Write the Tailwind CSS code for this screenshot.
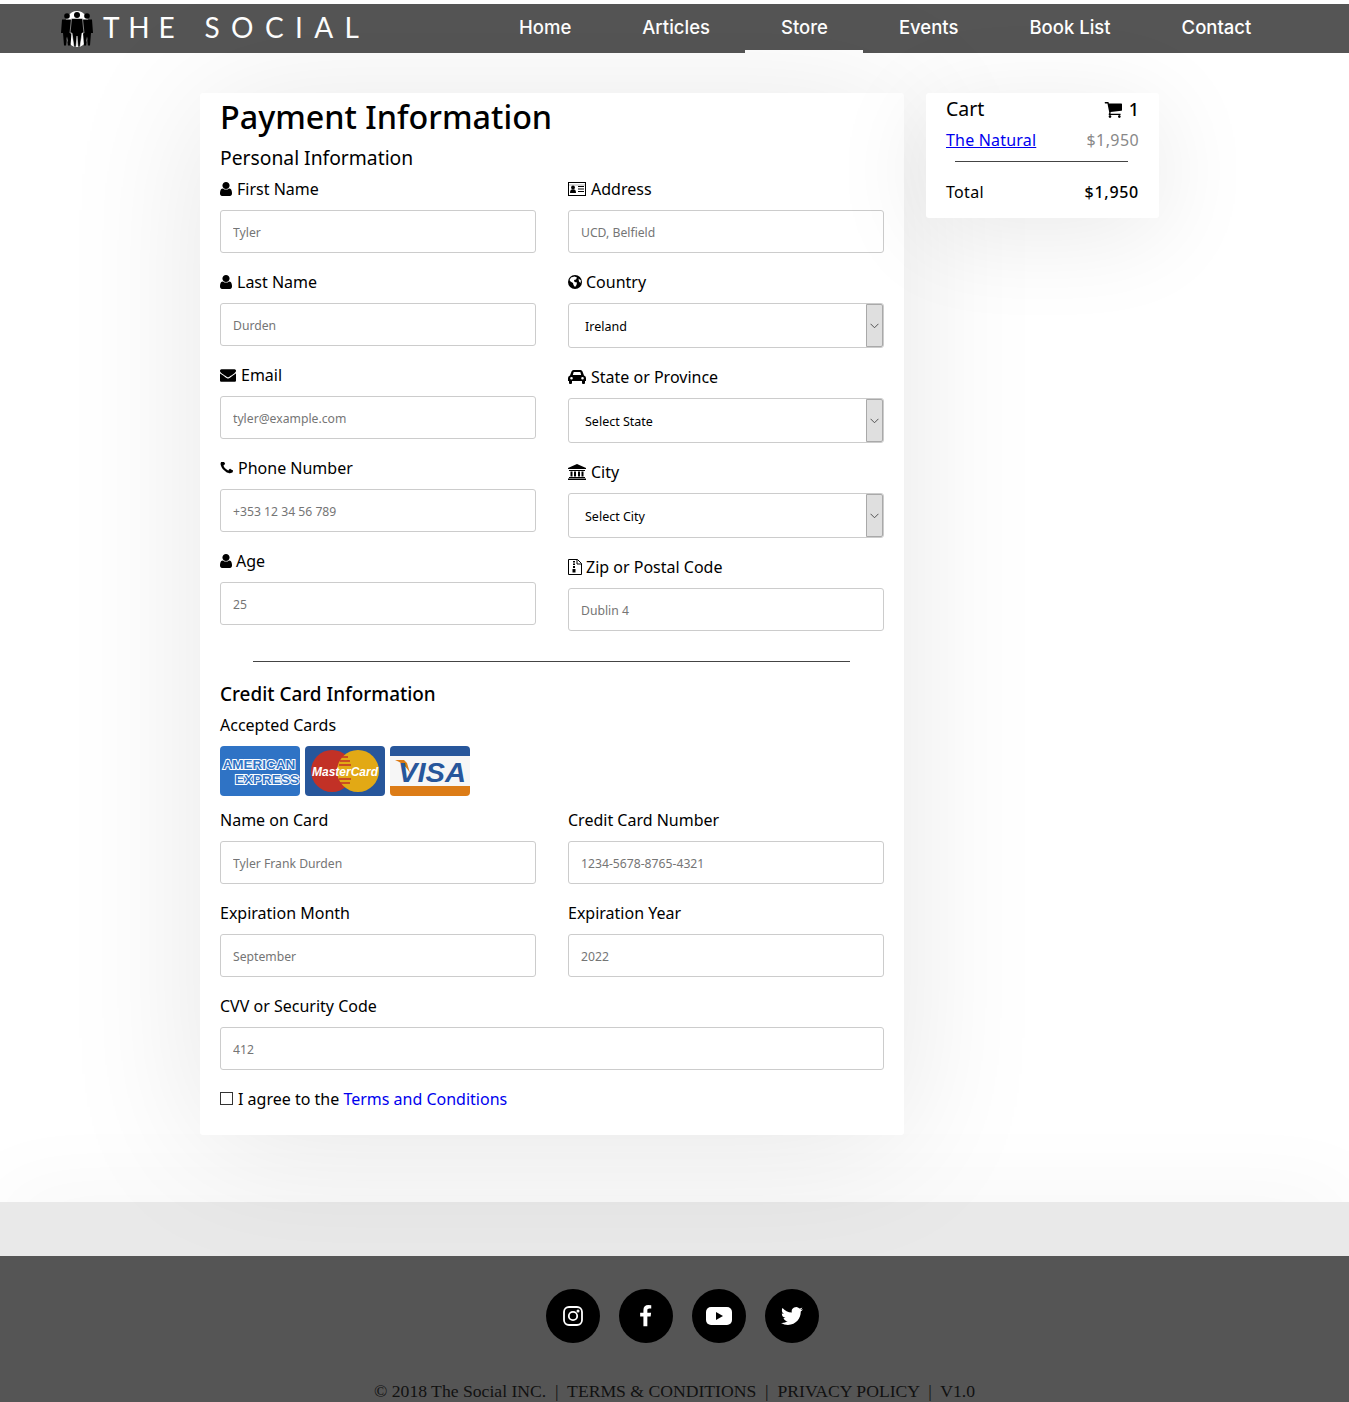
<!DOCTYPE html>
<html lang="en">
<head>
    <meta charset="UTF-8">
    <meta name="viewport" content="width=device-width, initial-scale=1.0">
    <title>Payment | The Social</title>
    <script src="https://cdn.jsdelivr.net/npm/@tailwindcss/browser@4"></script>
</head>
<body class="bg-white font-['Noto_Sans',sans-serif] text-black overflow-hidden">
    <!-- top nav -->
    <header class="mt-1 h-[49px] bg-[#555555] flex text-white">
        <div class="w-[519px] pl-[60px] flex items-center">
            <svg class="w-[34px] h-[36px] mt-px" viewBox="0 0 34 36" fill="#000">
                <ellipse cx="17" cy="18" rx="13" ry="18" fill="#fff"/>
                <circle cx="7" cy="5" r="2.800"/><path d="M2 8.500h10l1.500 13.500h-2l-1 12.500H8l-1-9-1 9H4L3 22H1z"/>
                <circle cx="27" cy="5" r="2.800"/><path d="M22 8.500h10l1 13.500h-2l-1 12.500h-2l-1-9-1 9h-2l-1-12.500h-2z"/>
                <circle cx="17" cy="4" r="3"/><path d="M11.500 7.500h11l1.500 14.500h-2l-2 14h-2l-1-11-1 11h-2l-2-14h-2z" stroke="#fff" stroke-width=".5"/>
            </svg>
            <span class="ml-[9px] pb-[3px] font-['Lato',sans-serif] text-[28px] leading-none whitespace-pre"><span class="tracking-[0.315em]">THE </span><span class="ml-[5px] tracking-[0.407em]">SOCIAL</span></span>
        </div>
        <nav class="flex text-[18.500px] font-medium font-['Inter',sans-serif] -ml-[35.500px]">
            <a class="px-[35.500px] flex items-center pb-0.5" href="#">Home</a>
            <a class="px-[35.500px] flex items-center pb-0.5" href="#">Articles</a>
            <a class="px-[35.500px] flex items-center pt-px border-b-[3px] border-white" href="#">Store</a>
            <a class="px-[35.500px] flex items-center pb-0.5" href="#">Events</a>
            <a class="px-[35.500px] flex items-center pb-0.5" href="#">Book List</a>
            <a class="px-[35.500px] flex items-center pb-0.5" href="#">Contact</a>
        </nav>
    </header>

    <main class="h-[1149px] relative z-10 pt-10 pl-[200px] flex items-start gap-[22px]">
        <!-- payment form -->
        <form class="w-[704px] h-[1042px] bg-white rounded-[3px] px-5 shadow-[0_10px_140px_rgba(0,0,0,0.1)]">
            <h1 class="text-[32.300px] leading-[46px] font-medium">Payment Information</h1>
            <h2 class="text-[19.300px] leading-[30px] mt-1 mb-[5px]">Personal Information</h2>

            <div class="grid grid-cols-2 gap-8 h-[465px]">
                <div>
                    <label class="flex items-center gap-[5px] h-6 pb-0.5 mb-2"><svg class="w-3 h-3.5" viewBox="256 128 1280 1536" preserveAspectRatio="none"><path d="M1536 1399q0 109-62.5 187t-150.5 78h-854q-88 0-150.5-78t-62.5-187q0-85 8.5-160.5t31.5-152 58.5-131 94-89 134.5-34.5q131 128 313 128t313-128q76 0 134.5 34.5t94 89 58.5 131 31.5 152 8.5 160.5zm-256-887q0 159-112.5 271.5t-271.5 112.5-271.5-112.5-112.5-271.5 112.5-271.5 271.5-112.5 271.5 112.5 112.5 271.5z"/></svg>First Name</label>
                    <input class="block w-full h-[43px] border border-[#cccccc] rounded-[3px] px-3 pt-0.5 text-[12.200px] mb-[18px] placeholder:text-[#757575]" placeholder="Tyler">

                    <label class="flex items-center gap-[5px] h-6 pb-0.5 mb-2"><svg class="w-3 h-3.5" viewBox="256 128 1280 1536" preserveAspectRatio="none"><path d="M1536 1399q0 109-62.5 187t-150.5 78h-854q-88 0-150.5-78t-62.5-187q0-85 8.5-160.5t31.5-152 58.5-131 94-89 134.5-34.5q131 128 313 128t313-128q76 0 134.5 34.5t94 89 58.5 131 31.5 152 8.5 160.5zm-256-887q0 159-112.5 271.5t-271.5 112.5-271.5-112.5-112.5-271.5 112.5-271.5 271.5-112.5 271.5 112.5 112.5 271.5z"/></svg>Last Name</label>
                    <input class="block w-full h-[43px] border border-[#cccccc] rounded-[3px] px-3 pt-0.5 text-[12.200px] mb-[18px] placeholder:text-[#757575]" placeholder="Durden">

                    <label class="flex items-center gap-[5px] h-6 pb-0.5 mb-2"><svg class="w-4 h-4" viewBox="0 0 1792 1792"><path d="M1792 710v794q0 66-47 113t-113 47h-1472q-66 0-113-47t-47-113v-794q44 49 101 87 362 246 497 345 57 42 92.5 65.5t94.5 48 110 24.5h2q51 0 110-24.5t94.5-48 92.5-65.5q170-123 498-345 57-39 100-87zm0-294q0 79-49 151t-122 123q-376 261-468 325-10 7-42.5 30.5t-54 38-52 32.5-57.5 27-50 9h-2q-23 0-50-9t-57.5-27-52-32.5-54-38-42.5-30.5q-91-64-262-182.5t-205-142.5q-62-42-117-115.5t-55-136.5q0-78 41.5-130t118.5-52h1472q65 0 112.5 47t47.5 113z"/></svg>Email</label>
                    <input class="block w-full h-[43px] border border-[#cccccc] rounded-[3px] px-3 pt-0.5 text-[12.200px] mb-[18px] placeholder:text-[#757575]" placeholder="tyler@example.com">

                    <label class="flex items-center gap-[5px] h-6 pb-0.5 mb-2"><svg class="w-[13px] h-[13px]" viewBox="128 256 1472 1472"><path d="M1600 1240q0 27-10 70.5t-21 68.5q-21 50-122 106-94 51-186 51-27 0-53-3.5t-57.5-12.5-47-14.5-55.5-20.5-49-18q-98-35-175-83-127-79-264-216t-216-264q-48-77-83-175-3-9-18-49t-20.5-55.5-14.5-47-12.5-57.5-3.5-53q0-92 51-186 56-101 106-122 25-11 68.5-21t70.5-10q14 0 21 3 18 6 53 76 11 19 30 54t35 63.5 31 53.5q3 4 17.5 25t21.5 35.5 7 28.5q0 20-28.5 50t-62 55-62 53-28.5 46q0 9 5 22.5t8.5 20.5 14 24 11.5 19q76 137 174 235t235 174q2 1 19 11.5t24 14 20.5 8.5 22.5 5q18 0 46-28.5t53-62 55-62 50-28.5q14 0 28.5 7t35.5 21.5 25 17.5q25 15 53.5 31t63.5 35 54 30q70 35 76 53 3 7 3 21z"/></svg>Phone Number</label>
                    <input class="block w-full h-[43px] border border-[#cccccc] rounded-[3px] px-3 pt-0.5 text-[12.200px] mb-[18px] placeholder:text-[#757575]" placeholder="+353 12 34 56 789">

                    <label class="flex items-center gap-1 h-6 pb-0.5 mb-2"><svg class="w-3 h-3.5" viewBox="256 128 1280 1536" preserveAspectRatio="none"><path d="M1536 1399q0 109-62.5 187t-150.5 78h-854q-88 0-150.5-78t-62.5-187q0-85 8.5-160.5t31.5-152 58.5-131 94-89 134.5-34.5q131 128 313 128t313-128q76 0 134.5 34.5t94 89 58.5 131 31.5 152 8.5 160.5zm-256-887q0 159-112.5 271.5t-271.5 112.5-271.5-112.5-112.5-271.5 112.5-271.5 271.5-112.5 271.5 112.5 112.5 271.5z"/></svg>Age</label>
                    <input class="block w-full h-[43px] border border-[#cccccc] rounded-[3px] px-3 pt-0.5 text-[12.200px] placeholder:text-[#757575]" placeholder="25">
                </div>
                <div>
                    <label class="flex items-center gap-[5px] h-6 pb-0.5 mb-2"><svg class="w-[18px] h-3.5" viewBox="0 0 18 14"><rect x=".5" y=".5" width="17" height="13" fill="none" stroke="#000"/><path d="M1 2h16v2H1z" fill="#000" opacity=".15"/><circle cx="5" cy="5.4" r="1.9"/><path d="M2 11c0-3 1-3.8 3-3.8S8 8 8 11z"/><path d="M10 4h6v1h-6zM10 6.500h6v1h-6zM10 9h6v1h-6z"/></svg>Address</label>
                    <input class="block w-full h-[43px] border border-[#cccccc] rounded-[3px] px-3 pt-0.5 text-[12.200px] mb-[18px] placeholder:text-[#757575]" placeholder="UCD, Belfield">

                    <label class="flex items-center gap-1 h-6 pb-0.5 mb-2"><svg class="w-3.5 h-3.5" viewBox="0 0 14 14"><circle cx="7" cy="7" r="7"/><path d="M3 2.500 6.500 1.500 9 2.500 8 4.500 6 5 6.500 7 9 7.500 8.500 10 7 12 5.500 10 5 8 2.500 6.500 1.500 5zM10.500 3.500 13 5.500 12.500 8 11 6.500z" fill="#fff"/></svg>Country</label>
                    <div class="relative h-[45px] mb-[18px]">
                        <select class="block appearance-none w-full h-full border border-[#cccccc] rounded-[3px] pl-4 pt-1 text-[12.500px] bg-white"><option>Ireland</option></select>
                        <span class="absolute right-px top-px bottom-px w-[17px] bg-[#dfdfdf] border border-[#a9a9a9] rounded-r-[2px] flex items-center justify-center"><svg class="w-[9px] h-[9px]" viewBox="0 0 8 8" fill="none" stroke="#444" stroke-width=".8"><path d="M.5 2.500 4 6l3.500-3.500"/></svg></span>
                    </div>

                    <label class="flex items-center gap-[5px] h-6 pb-0.5 mb-2"><svg class="w-[18px] h-3.5" viewBox="0 0 18 14"><path d="M3.500 1.500Q4 0 5.500 0h7Q14 0 14.500 1.500L16 5.500Q18 6 18 8v3h-1v2q0 1-1 1h-1q-1 0-1-1v-2H4v2q0 1-1 1H2q-1 0-1-1v-2H0V8q0-2 2-2.500zM4.800 5h8.400l-.9-3H5.700zM3.500 7a1.300 1.300 0 100 2.600 1.300 1.300 0 000-2.600zm11 0a1.300 1.300 0 100 2.600 1.300 1.300 0 000-2.600z" fill-rule="evenodd"/></svg>State or Province</label>
                    <div class="relative h-[45px] mb-[18px]">
                        <select class="block appearance-none w-full h-full border border-[#cccccc] rounded-[3px] pl-4 pt-1 text-[12.500px] bg-white"><option>Select State</option></select>
                        <span class="absolute right-px top-px bottom-px w-[17px] bg-[#dfdfdf] border border-[#a9a9a9] rounded-r-[2px] flex items-center justify-center"><svg class="w-[9px] h-[9px]" viewBox="0 0 8 8" fill="none" stroke="#444" stroke-width=".8"><path d="M.5 2.500 4 6l3.500-3.500"/></svg></span>
                    </div>

                    <label class="flex items-center gap-[5px] h-6 pb-0.5 mb-2"><svg class="w-[18px] h-4" viewBox="0 0 18 16"><path d="M9 0l9 4v1H0V4zM1 6h16v1H1zM2.500 7.500h2v5h-2zM6 7.500h2v5H6zM10 7.500h2v5h-2zM13.500 7.500h2v5h-2zM1 13h16v1H1zM0 14.500h18V16H0z"/></svg>City</label>
                    <div class="relative h-[45px] mb-[18px]">
                        <select class="block appearance-none w-full h-full border border-[#cccccc] rounded-[3px] pl-4 pt-1 text-[12.500px] bg-white"><option>Select City</option></select>
                        <span class="absolute right-px top-px bottom-px w-[17px] bg-[#dfdfdf] border border-[#a9a9a9] rounded-r-[2px] flex items-center justify-center"><svg class="w-[9px] h-[9px]" viewBox="0 0 8 8" fill="none" stroke="#444" stroke-width=".8"><path d="M.5 2.500 4 6l3.500-3.500"/></svg></span>
                    </div>

                    <label class="flex items-center gap-1 h-6 pb-0.5 mb-2"><svg class="w-3.5 h-4" viewBox="0 0 14 16"><path d="M.5.500h9l4 4v11H.5z" fill="none" stroke="#000"/><path d="M9 .500v4.500h4.500" fill="none" stroke="#000"/><path d="M5 2h2v1.500H5zM5 4.500h2V6H5zM5 7h2v2H5zM4.500 10h3v3.500h-3z"/></svg>Zip or Postal Code</label>
                    <input class="block w-full h-[43px] border border-[#cccccc] rounded-[3px] px-3 pt-0.5 text-[12.200px] placeholder:text-[#757575]" placeholder="Dublin 4">
                </div>
            </div>

            <hr class="w-[597px] ml-[33px] mt-[18px] border-t border-[#444444]">

            <h2 class="text-[18.900px] font-medium leading-[30px] mt-[17px]">Credit Card Information</h2>
            <p class="h-6 leading-6 mt-[4px]">Accepted Cards</p>

            <div class="flex gap-[5px] mt-[9px] mb-[12px]">
                <svg class="w-20 h-[50px]" viewBox="0 0 80 50">
                    <rect width="80" height="50" rx="4" fill="#2f73c5"/>
                    <text class="[paint-order:stroke]" x="39" y="23" text-anchor="middle" font-family="Liberation Sans" font-size="13.500" font-weight="bold" fill="#2f73c5" stroke="#fff" stroke-width="2">AMERICAN</text>
                    <text class="[paint-order:stroke]" x="47" y="38" text-anchor="middle" font-family="Liberation Sans" font-size="13.500" font-weight="bold" fill="#2f73c5" stroke="#fff" stroke-width="2">EXPRESS</text>
                </svg>
                <svg class="w-20 h-[50px]" viewBox="0 0 80 50">
                    <rect width="80" height="50" rx="4" fill="#27569b"/>
                    <circle cx="27" cy="25" r="21" fill="#c23126"/><circle cx="53" cy="25" r="21" fill="#e2a915"/>
                    <path d="M37 11h6M35 15h10M34 19h12M34 33h12M35 37h10" stroke="#c23126" stroke-width="1.500"/>
                    <text x="40" y="30" text-anchor="middle" font-family="Liberation Sans" font-size="12" font-weight="bold" font-style="italic" fill="#fff">MasterCard</text>
                </svg>
                <svg class="w-20 h-[50px]" viewBox="0 0 80 50">
                    <rect width="80" height="50" rx="4" fill="#f6f6f6"/>
                    <path d="M0 10V4q0-4 4-4h72q4 0 4 4v6z" fill="#27569b"/>
                    <path d="M0 40h80v6q0 4-4 4H4q-4 0-4-4z" fill="#dc7c17"/>
                    <path d="M5 14h9l3 3 3 10q-6-10-15-13z" fill="#dc7c17"/>
                    <text x="42" y="36" text-anchor="middle" font-family="Liberation Sans" font-size="28" font-weight="bold" font-style="italic" fill="#27569b" textLength="68" lengthAdjust="spacingAndGlyphs">VISA</text>
                </svg>
            </div>

            <div class="grid grid-cols-2 gap-x-8">
                <div>
                    <label class="block h-6 leading-6 mb-[9px]">Name on Card</label>
                    <input class="block w-full h-[43px] border border-[#cccccc] rounded-[3px] px-3 pt-0.5 text-[12.200px] mb-[17px] placeholder:text-[#757575]" placeholder="Tyler Frank Durden">
                </div>
                <div>
                    <label class="block h-6 leading-6 mb-[9px]">Credit Card Number</label>
                    <input class="block w-full h-[43px] border border-[#cccccc] rounded-[3px] px-3 pt-0.5 text-[12.200px] mb-[17px] placeholder:text-[#757575]" placeholder="1234-5678-8765-4321">
                </div>
                <div>
                    <label class="block h-6 leading-6 mb-[9px]">Expiration Month</label>
                    <input class="block w-full h-[43px] border border-[#cccccc] rounded-[3px] px-3 pt-0.5 text-[12.200px] mb-[17px] placeholder:text-[#757575]" placeholder="September">
                </div>
                <div>
                    <label class="block h-6 leading-6 mb-[9px]">Expiration Year</label>
                    <input class="block w-full h-[43px] border border-[#cccccc] rounded-[3px] px-3 pt-0.5 text-[12.200px] mb-[17px] placeholder:text-[#757575]" placeholder="2022">
                </div>
            </div>

            <label class="block h-6 leading-6 mb-[9px]">CVV or Security Code</label>
            <input class="block w-full h-[43px] border border-[#cccccc] rounded-[3px] px-3 pt-0.5 text-[12.200px] placeholder:text-[#757575]" placeholder="412">

            <label class="flex items-center gap-[5px] h-6 mt-[17px]">
                <span class="w-[13px] h-[13px] -mt-0.5 border border-[#333333] bg-white"></span>
                <span>I agree to the <a class="text-[#0000ee]" href="#">Terms and Conditions</a></span>
            </label>
        </form>

        <!-- cart -->
        <aside class="w-[233px] h-[125px] bg-white rounded-[3px] px-5 shadow-[0_15px_100px_rgba(0,0,0,0.09)]">
            <div class="flex justify-between items-center h-[33px] text-[18px]">
                <span class="text-[19.500px] pb-0.5">Cart</span>
                <span class="flex items-center gap-[7px] font-medium"><svg class="w-[18px] h-4" viewBox="0 256 1728 1408" preserveAspectRatio="none"><path d="M704 1536q0 52-38 90t-90 38-90-38-38-90 38-90 90-38 90 38 38 90zm896 0q0 52-38 90t-90 38-90-38-38-90 38-90 90-38 90 38 38 90zm128-1088v512q0 24-16.500 42.500t-40.500 21.500l-1044 122q13 60 13 70 0 16-24 64h920q26 0 45 19t19 45-19 45-45 19h-1024q-26 0-45-19t-19-45q0-11 8-31.500t16-36 21.500-40 15.500-29.500l-177-823h-204q-26 0-45-19t-19-45 19-45 45-19h256q16 0 28.500 6.500t19.500 15.500 13 24.500 8 26 5.500 29.500 4.500 26h1201q26 0 45 19t19 45z"/></svg>1</span>
            </div>
            <div class="flex justify-between h-[28px] items-center">
                <a class="text-[#0000ee] underline tracking-[0.012em]" href="#">The Natural</a>
                <span class="text-[#888888] tracking-[0.025em]">$1,950</span>
            </div>
            <hr class="mx-[9px] mr-[11px] mt-[7px] border-t border-[#444444]">
            <div class="flex justify-between items-center mt-[18px] h-6">
                <span class="tracking-[0.02em]">Total</span>
                <span class="font-medium tracking-[0.045em]">$1,950</span>
            </div>
        </aside>
    </main>

    <div class="h-[54px] bg-[#e9e9e9] shadow-[0_-5px_90px_rgba(0,0,0,0.05)]"></div>

    <footer class="h-[146px] bg-[#555555] relative z-20 pt-[33px]">
        <div class="flex justify-center gap-[19.300px] pl-4">
            <a class="w-[54px] h-[54px] rounded-full bg-black flex items-center justify-center" href="#">
                <svg class="w-5 h-5" viewBox="0 0 20 20" fill="none" stroke="#fff" stroke-width="1.800"><rect x="1" y="1" width="18" height="18" rx="5"/><circle cx="10" cy="10" r="4.200"/><circle cx="15" cy="5" r=".6" fill="#fff"/></svg>
            </a>
            <a class="w-[54px] h-[54px] rounded-full bg-black flex items-center justify-center" href="#">
                <svg class="w-[23px] h-[23px]" viewBox="0 0 1792 1792" fill="#fff"><path d="M1343 12v264h-157q-86 0-116 36t-30 108v189h293l-39 296h-254v759h-306v-759h-255v-296h255v-218q0-186 104-288.500t277-102.500q147 0 228 12z"/></svg>
            </a>
            <a class="w-[54px] h-[54px] rounded-full bg-black flex items-center justify-center" href="#">
                <svg class="w-[26px] h-[18px]" viewBox="0 0 26 18"><rect width="26" height="18" rx="5" fill="#fff"/><path d="M10 5v8l7-4z" fill="#000"/></svg>
            </a>
            <a class="w-[54px] h-[54px] rounded-full bg-black flex items-center justify-center" href="#">
                <svg class="w-[22px] h-[22px]" viewBox="0 0 24 24" fill="#fff"><path d="M23.953 4.570a10 10 0 01-2.825.775 4.958 4.958 0 002.163-2.723c-.951.555-2.005.959-3.127 1.184a4.920 4.920 0 00-8.384 4.482C7.690 8.095 4.067 6.130 1.640 3.162a4.822 4.822 0 00-.666 2.475c0 1.710.870 3.213 2.188 4.096a4.904 4.904 0 01-2.228-.616v.060a4.923 4.923 0 003.946 4.827 4.996 4.996 0 01-2.212.085 4.936 4.936 0 004.604 3.417 9.867 9.867 0 01-6.102 2.105c-.390 0-.779-.023-1.170-.067a13.995 13.995 0 007.557 2.209c9.053 0 13.998-7.496 13.998-13.985 0-.210 0-.420-.015-.630A9.935 9.935 0 0024 4.590z"/></svg>
            </a>
        </div>
        <p class="mt-[36px] text-center font-['Liberation_Serif',serif] text-[17.650px] leading-6 text-[#111111] whitespace-pre">© 2018 The Social INC.  |  TERMS &amp; CONDITIONS  |  PRIVACY POLICY  |  V1.0</p>
    </footer>
</body>
</html>
